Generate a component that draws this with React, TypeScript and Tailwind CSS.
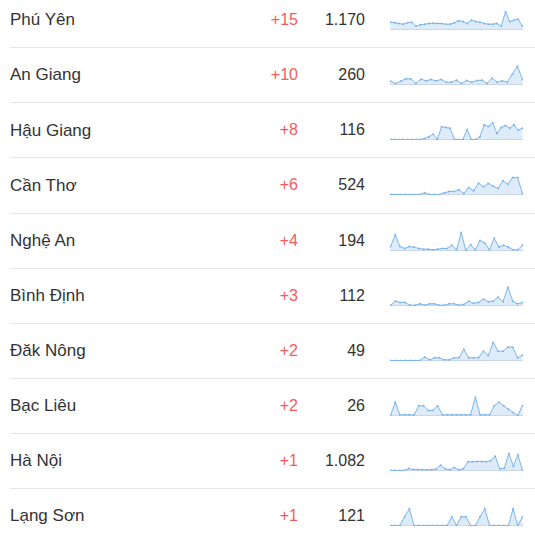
import React from "react";

type Row = { name: string; delta: string; total: string; spark: number[] };

// heights read off the reference, 3 units = 1px
const rows: Row[] = [
  { name: "Phú Yên", delta: "+15", total: "1.170", spark: [22, 20, 18, 16, 20, 22, 10, 14, 16, 18, 19, 18, 18, 16, 16, 20, 26, 24, 18, 28, 24, 22, 18, 16, 16, 18, 10, 53, 24, 28, 31, 10] },
  { name: "An Giang", delta: "+10", total: "260", spark: [10, 3, 10, 17, 17, 3, 16, 11, 15, 11, 15, 7, 7, 13, 3, 12, 7, 12, 13, 3, 19, 7, 11, 7, 31, 55, 15] },
  { name: "Hậu Giang", delta: "+8", total: "116", spark: [0, 0, 0, 0, 0, 0, 0, 0, 3, 8, 16, 1, 38, 36, 34, 0, 0, 0, 30, 0, 0, 8, 44, 39, 50, 18, 36, 42, 34, 44, 28, 34] },
  { name: "Cần Thơ", delta: "+6", total: "524", spark: [0, 0, 0, 0, 0, 0, 0, 5, 0, 0, 0, 5, 9, 9, 14, 3, 21, 11, 34, 23, 33, 25, 18, 41, 31, 51, 51, 2] },
  { name: "Nghệ An", delta: "+4", total: "194", spark: [12, 47, 12, 6, 12, 10, 6, 4, 4, 2, 4, 6, 6, 16, 2, 54, 0, 18, 2, 30, 22, 2, 37, 10, 16, 10, 2, 2, 16] },
  { name: "Bình Định", delta: "+3", total: "112", spark: [0, 13, 9, 9, 1, 1, 5, 1, 5, 5, 1, 1, 5, 5, 1, 3, 13, 7, 9, 19, 11, 13, 25, 11, 55, 13, 5, 9] },
  { name: "Đăk Nông", delta: "+2", total: "49", spark: [0, 0, 0, 0, 0, 0, 0, 10, 2, 8, 8, 2, 2, 8, 8, 34, 8, 8, 8, 28, 15, 54, 28, 28, 40, 40, 8, 16] },
  { name: "Bạc Liêu", delta: "+2", total: "26", spark: [0, 40, 2, 2, 2, 2, 29, 29, 15, 15, 29, 2, 2, 2, 2, 2, 2, 2, 55, 2, 2, 2, 29, 40, 29, 19, 9, 0, 29] },
  { name: "Hà Nội", delta: "+1", total: "1.082", spark: [0, 0, 0, 0, 6, 3, 3, 2, 2, 3, 4, 16, 5, 2, 9, 2, 5, 26, 26, 27, 27, 26, 29, 43, 5, 7, 51, 13, 47, 0] },
  { name: "Lạng Sơn", delta: "+1", total: "121", spark: [0, 0, 0, 26, 50, 0, 0, 0, 0, 0, 0, 0, 0, 26, 0, 26, 26, 0, 0, 26, 50, 0, 0, 0, 0, 0, 50, 0, 26] },
];

const W = 133;
const H = 20;
const BASE = 19.5;

const Sparkline = ({ data }: { data: number[] }) => {
  const pts = data.map((h, i) => {
    const x = 0.5 + (i * (W - 1)) / (data.length - 1);
    const y = BASE - h / 3;
    return [x, y];
  });
  const line = pts.map((p, i) => `${i === 0 ? "M" : "L"}${p[0].toFixed(1)} ${p[1].toFixed(1)}`).join(" ");
  const area = `${line} L${pts[pts.length - 1][0].toFixed(1)} ${BASE} L${pts[0][0].toFixed(1)} ${BASE} Z`;
  return (
    <svg width={W} height={H} viewBox={`0 0 ${W} ${H}`} className="block">
      <path d={area} fill="#7cb5ec" fillOpacity={0.25} />
      <line x1={0} y1={BASE} x2={W} y2={BASE} stroke="#ccd6eb" strokeWidth={1} />
      <path d={line} fill="none" stroke="#7cb5ec" strokeWidth={1} strokeLinejoin="round" />
      {pts.map((p, i) => (
        <circle key={i} cx={p[0]} cy={p[1]} r={1} fill="#7cb5ec" />
      ))}
    </svg>
  );
};

const App = () => {
  return (
    <div className="w-[535px] h-[535px] overflow-hidden bg-white pl-[10px]" style={{ fontFamily: '"Liberation Sans", Arial, sans-serif' }}>
      <div className="-mt-[7px]">
        {rows.map((r) => (
          <div key={r.name} className="flex items-center h-[55.125px] border-b border-[#e6e6e6]">
            <div className="flex-1 text-[17px] text-[#333333]">{r.name}</div>
            <div className="w-[60px] text-right text-[16px] text-[#f45b5b]">{r.delta}</div>
            <div className="w-[67px] text-right text-[16px] text-[#333333]">{r.total}</div>
            <div className="ml-[25px] mr-[12px] w-[133px]">
              <Sparkline data={r.spark} />
            </div>
          </div>
        ))}
      </div>
    </div>
  );
};

export default App;
